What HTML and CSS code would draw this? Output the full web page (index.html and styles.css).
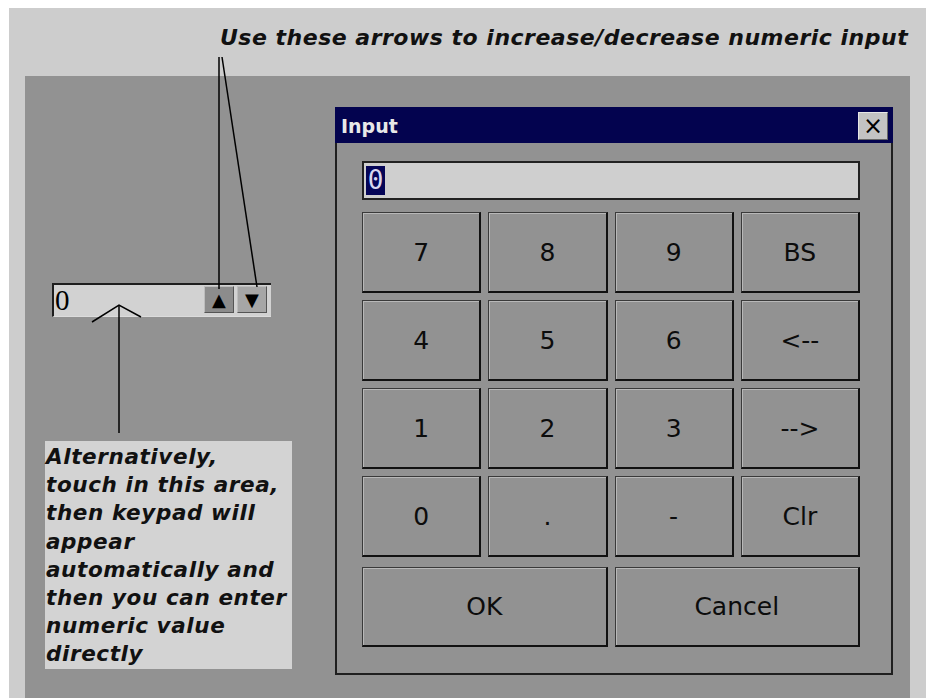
FILE: index.html
```html
<!DOCTYPE html>
<html lang="en">
<head>
    <meta charset="UTF-8">
    <title>Numeric input</title>
    <link rel="stylesheet" href="styles.css">
</head>
<body>
<div class="screen">
    <div class="hint-top">Use these arrows to increase/decrease numeric input</div>
    <div class="panel">
        <div class="field-col">
            <div class="spin">
                <div class="spin-value">0</div>
                <span class="spin-btn up">&#9650;</span>
                <span class="spin-btn down">&#9660;</span>
            </div>
            <div class="note">Alternatively,<br>touch in this area,<br>then keypad will<br>appear<br>automatically and<br>then you can enter<br>numeric value<br>directly</div>
        </div>
        <div class="dialog">
            <div class="dialog-title">
                <span>Input</span>
                <span class="close">&#215;</span>
            </div>
            <div class="dialog-body">
                <div class="entry"><span class="sel">0</span></div>
                <div class="keys">
                    <div class="key">7</div>
                    <div class="key">8</div>
                    <div class="key">9</div>
                    <div class="key">BS</div>
                    <div class="key">4</div>
                    <div class="key">5</div>
                    <div class="key">6</div>
                    <div class="key">&lt;--</div>
                    <div class="key">1</div>
                    <div class="key">2</div>
                    <div class="key">3</div>
                    <div class="key">--&gt;</div>
                    <div class="key">0</div>
                    <div class="key">.</div>
                    <div class="key">-</div>
                    <div class="key">Clr</div>
                </div>
                <div class="actions">
                    <div class="key">OK</div>
                    <div class="key">Cancel</div>
                </div>
            </div>
        </div>
    </div>
</div>
<!-- callout lines -->
<svg class="callouts" width="926" height="698" viewBox="0 0 926 698">
    <g stroke="#000" stroke-width="1.5" fill="none">
        <line x1="219" y1="57" x2="219" y2="289"/>
        <line x1="222" y1="57" x2="257" y2="287"/>
        <polyline points="92,322 119,305 141,317"/>
        <line x1="119" y1="305" x2="119" y2="433"/>
    </g>
</svg>
</body>
</html>
```

FILE: styles.css
```css
* {
    margin: 0;
    padding: 0;
    box-sizing: border-box;
}

body {
    background: #fff;
    position: relative;
    width: 926px;
    height: 698px;
    overflow: hidden;
}

.screen {
    margin: 8px 0 0 9px;
    width: 917px;
    height: 690px;
    background: #cdcdcd;
}

.hint-top {
    height: 68px;
    padding: 17px 0 0 211px;
    font-family: "DejaVu Sans", sans-serif;
    font-style: oblique;
    font-weight: bold;
    font-size: 22px;
    line-height: 26px;
    letter-spacing: 0.5px;
    color: #111;
    white-space: nowrap;
}

.panel {
    margin-left: 16px;
    width: 885px;
    height: 622px;
    background: #929292;
    display: flex;
}

.field-col {
    width: 285px;
    padding-left: 20px;
}

.spin {
    margin: 207px 0 0 7px;
    width: 219px;
    height: 34px;
    display: flex;
    align-items: flex-start;
    gap: 3px;
    padding: 1px 4px 0 0;
    background: #d2d2d2;
    border-top: 2px solid #1e1e1e;
    border-left: 2px solid #1e1e1e;
    border-bottom: 1px solid #dcdcdc;
}

.spin-value {
    flex: 1;
    padding-left: 1px;
    font-family: "Liberation Serif", serif;
    font-size: 29px;
    line-height: 28px;
    color: #000;
}

.spin-btn {
    width: 30px;
    height: 27px;
    display: flex;
    align-items: center;
    justify-content: center;
    font-family: "DejaVu Sans", sans-serif;
    font-size: 18px;
    color: #000;
    border: 1px solid #555;
    border-top-color: #bdbdbd;
    border-left-color: #bdbdbd;
}

.spin-btn.up {
    background: #8c8c8c;
}

.spin-btn.down {
    background: #a6a6a6;
}

.note {
    margin-top: 124px;
    width: 247px;
    height: 228px;
    padding: 2px 0 0 1px;
    background: #d3d3d3;
    font-family: "DejaVu Sans", sans-serif;
    font-style: oblique;
    font-weight: bold;
    font-size: 21.5px;
    line-height: 28.2px;
    letter-spacing: 0.6px;
    color: #111;
    white-space: nowrap;
}

.dialog {
    margin: 31px 0 0 25px;
    width: 558px;
    height: 568px;
}

.dialog-title {
    height: 36px;
    display: flex;
    align-items: center;
    justify-content: space-between;
    padding: 2px 5px 0 6px;
    background: #03034f;
    color: #e8e8e8;
    font-family: "DejaVu Sans", sans-serif;
    font-weight: bold;
    font-size: 19px;
}

.close {
    width: 30px;
    height: 28px;
    display: flex;
    align-items: center;
    justify-content: center;
    background: #c3c3c3;
    color: #000;
    font-weight: normal;
    font-size: 24px;
    border: 1px solid #666;
    border-top-color: #e6e6e6;
    border-left-color: #e6e6e6;
}

.dialog-body {
    height: 532px;
    padding: 18px 31px 0 25px;
    background: #929292;
    border: 2px solid #1f1f1f;
    border-top: none;
}

.entry {
    height: 39px;
    margin-bottom: 12px;
    padding: 3px 0 0 2px;
    background: #cfcfcf;
    border: 2px solid #222;
}

.sel {
    display: inline-block;
    width: 19px;
    height: 29px;
    background: #050557;
    color: #d8d8f0;
    font-family: "DejaVu Sans Mono", monospace;
    font-size: 26px;
    line-height: 29px;
    text-align: center;
}

.keys {
    display: grid;
    grid-template-columns: repeat(4, 1fr);
    grid-auto-rows: 81px;
    gap: 7px;
}

.actions {
    display: grid;
    grid-template-columns: repeat(2, 1fr);
    grid-auto-rows: 80px;
    gap: 7px;
    margin-top: 10px;
}

.key {
    display: flex;
    align-items: center;
    justify-content: center;
    background: #929292;
    border: 1px solid #3a3a3a;
    border-right: 2px solid #111;
    border-bottom: 2px solid #111;
    box-shadow: inset 1px 1px 0 #b8b8b8;
    font-family: "DejaVu Sans", sans-serif;
    font-size: 25px;
    color: #0c0c0c;
}

.callouts {
    position: absolute;
    left: 0;
    top: 0;
    pointer-events: none;
}
```
